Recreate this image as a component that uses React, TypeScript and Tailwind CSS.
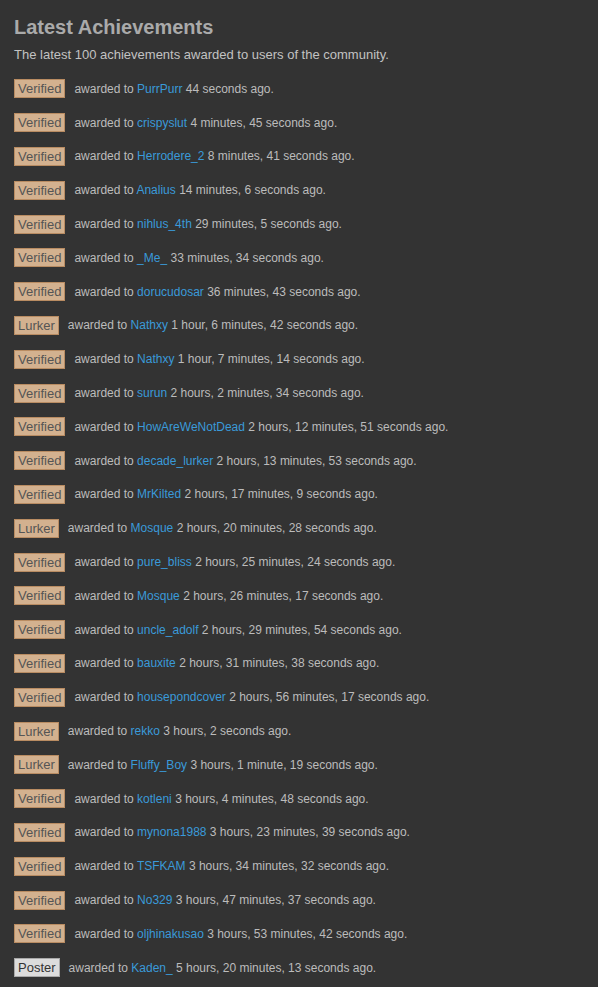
const rows: [string, string, string][] = [
  ["Verified", "PurrPurr", "44 seconds ago."],
  ["Verified", "crispyslut", "4 minutes, 45 seconds ago."],
  ["Verified", "Herrodere_2", "8 minutes, 41 seconds ago."],
  ["Verified", "Analius", "14 minutes, 6 seconds ago."],
  ["Verified", "nihlus_4th", "29 minutes, 5 seconds ago."],
  ["Verified", "_Me_", "33 minutes, 34 seconds ago."],
  ["Verified", "dorucudosar", "36 minutes, 43 seconds ago."],
  ["Lurker", "Nathxy", "1 hour, 6 minutes, 42 seconds ago."],
  ["Verified", "Nathxy", "1 hour, 7 minutes, 14 seconds ago."],
  ["Verified", "surun", "2 hours, 2 minutes, 34 seconds ago."],
  ["Verified", "HowAreWeNotDead", "2 hours, 12 minutes, 51 seconds ago."],
  ["Verified", "decade_lurker", "2 hours, 13 minutes, 53 seconds ago."],
  ["Verified", "MrKilted", "2 hours, 17 minutes, 9 seconds ago."],
  ["Lurker", "Mosque", "2 hours, 20 minutes, 28 seconds ago."],
  ["Verified", "pure_bliss", "2 hours, 25 minutes, 24 seconds ago."],
  ["Verified", "Mosque", "2 hours, 26 minutes, 17 seconds ago."],
  ["Verified", "uncle_adolf", "2 hours, 29 minutes, 54 seconds ago."],
  ["Verified", "bauxite", "2 hours, 31 minutes, 38 seconds ago."],
  ["Verified", "housepondcover", "2 hours, 56 minutes, 17 seconds ago."],
  ["Lurker", "rekko", "3 hours, 2 seconds ago."],
  ["Lurker", "Fluffy_Boy", "3 hours, 1 minute, 19 seconds ago."],
  ["Verified", "kotleni", "3 hours, 4 minutes, 48 seconds ago."],
  ["Verified", "mynona1988", "3 hours, 23 minutes, 39 seconds ago."],
  ["Verified", "TSFKAM", "3 hours, 34 minutes, 32 seconds ago."],
  ["Verified", "No329", "3 hours, 47 minutes, 37 seconds ago."],
  ["Verified", "oljhinakusao", "3 hours, 53 minutes, 42 seconds ago."],
  ["Poster", "Kaden_", "5 hours, 20 minutes, 13 seconds ago."],
];

function Badge({ name }: { name: string }) {
  const poster = name === "Poster";
  return (
    <span
      className={
        poster
          ? "mr-[9px] inline-block border border-[#a8a8a8] bg-[#dcdcdc] px-[3px] text-[13px] leading-[17px] text-[#333]"
          : "mr-[9px] inline-block border border-[#b98c62] bg-[#d3b18f] px-[3px] text-[13px] leading-[17px] text-[#555]"
      }
    >
      {name}
    </span>
  );
}

export default function App() {
  return (
    <div className="min-h-screen bg-[#333333] px-[14px] pt-[15px] font-['Liberation_Sans',Arial,sans-serif]">
      <h1 className="text-[20px] font-bold leading-[24px] text-[#aaaaaa]">Latest Achievements</h1>
      <p className="mt-[7px] text-[13px] leading-[18px] text-[#c2c2c2]">
        The latest 100 achievements awarded to users of the community.
      </p>
      <ul className="mt-[8px]">
        {rows.map(([badge, user, time], i) => (
          <li key={i} className="flex h-[33.8px] items-center text-[12px] text-[#bcbcbc]">
            <Badge name={badge} />
            <span>
              awarded to <a className="text-[#3a9ad9]">{user}</a> {time}
            </span>
          </li>
        ))}
      </ul>
    </div>
  );
}
